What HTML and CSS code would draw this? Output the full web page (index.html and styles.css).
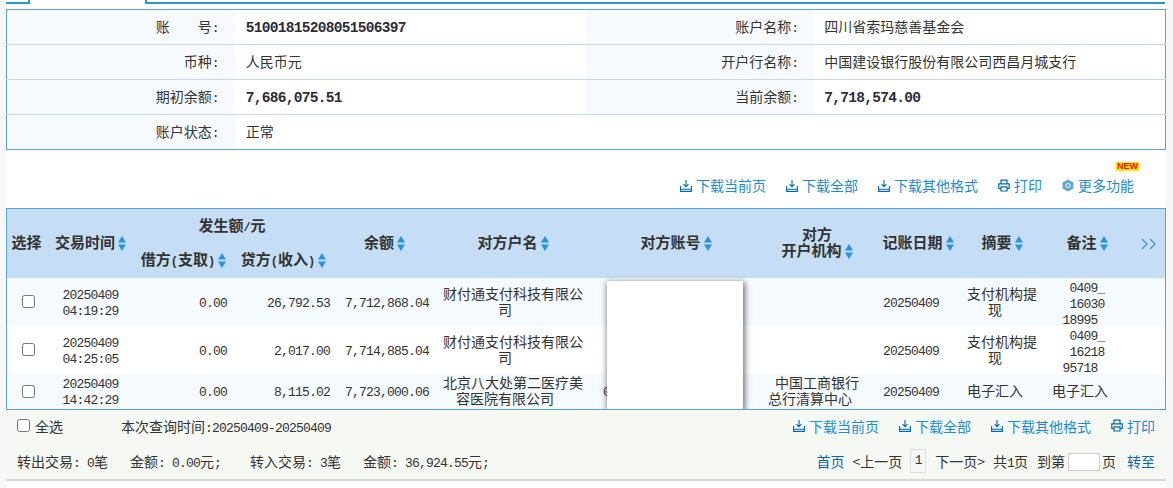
FILE: index.html
```html
<!DOCTYPE html>
<html lang="zh-CN">
<head>
<meta charset="utf-8">
<title>账户明细</title>
<link rel="stylesheet" href="styles.css">
</head>
<body>
<svg class="defs" width="0" height="0" aria-hidden="true">
  <symbol id="dl" viewBox="0 0 12 13"><path d="M6 1v6.5M3.6 5.2 6 7.8l2.400-2.600M.6 7v5.400h10.800V7M.6 10.300h10.800" fill="none" stroke="currentColor" stroke-width="1.100"/></symbol>
  <symbol id="pr" viewBox="0 0 12 13"><path d="M3 4.500V1.200h6v3.300M3 9.500H.8V4.800h10.400v4.700H9M3 7.800h6v4.200H3z" fill="none" stroke="currentColor" stroke-width="1.200"/></symbol>
  <symbol id="gear" viewBox="0 0 12 13"><path d="M6 .5 11.400 3.500v6L6 12.500.6 9.500v-6z" fill="#5aa7dc"/><circle cx="6" cy="6.500" r="2.600" fill="#dcecf8"/><circle cx="6" cy="6.500" r="1.300" fill="#4a9ad6"/></symbol>
  <symbol id="sort" viewBox="0 0 8 15"><path d="M4 0 8 6.500H0zM4 15 0 8.500h8z" fill="#2a93dd"/></symbol>
</svg>
<div class="page">
  <div class="tabs"><span class="tab-left"></span><span class="tab-right"></span></div>

  <table class="info">
    <colgroup><col class="c-label"><col class="c-value"><col class="c-label"><col class="c-value"></colgroup>
    <tr><th>账　　号<span class="num">:</span></th><td><b class="strong">51001815208051506397</b></td><th>账户名称<span class="num">:</span></th><td>四川省索玛慈善基金会</td></tr>
    <tr><th>币种<span class="num">:</span></th><td>人民币元</td><th>开户行名称<span class="num">:</span></th><td>中国建设银行股份有限公司西昌月城支行</td></tr>
    <tr><th>期初余额<span class="num">:</span></th><td><b class="strong">7,686,075.51</b></td><th>当前余额<span class="num">:</span></th><td><b class="strong">7,718,574.00</b></td></tr>
    <tr><th>账户状态<span class="num">:</span></th><td>正常</td><td class="blank" colspan="2"></td></tr>
  </table>

  <div class="tools tools-top">
    <a class="tool"><svg class="ico"><use href="#dl"/></svg>下载当前页</a>
    <a class="tool"><svg class="ico"><use href="#dl"/></svg>下载全部</a>
    <a class="tool"><svg class="ico"><use href="#dl"/></svg>下载其他格式</a>
    <a class="tool"><svg class="ico"><use href="#pr"/></svg>打印</a>
    <a class="tool more"><svg class="ico"><use href="#gear"/></svg>更多功能<span class="new">NEW</span></a>
  </div>

  <div class="grid-wrap">
    <table class="grid">
      <colgroup>
        <col class="w39"><col class="w89"><col class="w97"><col class="w103"><col class="w99"><col class="w158"><col class="w168"><col class="w114"><col class="w88"><col class="w80"><col class="w90"><col class="w33">
      </colgroup>
      <thead>
        <tr class="h1">
          <th rowspan="2">选择</th>
          <th rowspan="2">交易时间<svg class="sort"><use href="#sort"/></svg></th>
          <th colspan="2" class="amount">发生额<span class="paren">/</span>元</th>
          <th rowspan="2">余额<svg class="sort"><use href="#sort"/></svg></th>
          <th rowspan="2">对方户名<svg class="sort"><use href="#sort"/></svg></th>
          <th rowspan="2">对方账号<svg class="sort"><use href="#sort"/></svg></th>
          <th rowspan="2">对方<br>开户机构<svg class="sort"><use href="#sort"/></svg></th>
          <th rowspan="2">记账日期<svg class="sort"><use href="#sort"/></svg></th>
          <th rowspan="2">摘要<svg class="sort"><use href="#sort"/></svg></th>
          <th rowspan="2">备注<svg class="sort"><use href="#sort"/></svg></th>
          <th rowspan="2"><svg class="chev" viewBox="0 0 16 12"><path d="M1 1l5 5-5 5M9 1l5 5-5 5" fill="none" stroke="#3f8fd0" stroke-width="1.200"/></svg></th>
        </tr>
        <tr class="h2">
          <th>借方<span class="paren">(</span>支取<span class="paren">)</span><svg class="sort"><use href="#sort"/></svg></th>
          <th>贷方<span class="paren">(</span>收入<span class="paren">)</span><svg class="sort"><use href="#sort"/></svg></th>
        </tr>
      </thead>
      <tbody>
        <tr class="row odd">
          <td class="ck"><input type="checkbox"></td>
          <td class="mid"><span class="num">20250409<br>04:19:29</span></td>
          <td class="amt"><span class="num">0.00</span></td>
          <td class="amt"><span class="num">26,792.53</span></td>
          <td class="amt"><span class="num">7,712,868.04</span></td>
          <td class="mid">财付通支付科技有限公<span class="back back16">司</span></td>
          <td></td>
          <td></td>
          <td class="mid"><span class="back"><span class="num">20250409</span></span></td>
          <td class="mid">支付机构提<span class="back">现</span></td>
          <td class="mid rem"><span class="num">0409_<br>16030</span><span class="back"><span class="num">18995</span></span></td>
          <td></td>
        </tr>
        <tr class="row">
          <td class="ck"><input type="checkbox"></td>
          <td class="mid"><span class="num">20250409<br>04:25:05</span></td>
          <td class="amt"><span class="num">0.00</span></td>
          <td class="amt"><span class="num">2,017.00</span></td>
          <td class="amt"><span class="num">7,714,885.04</span></td>
          <td class="mid">财付通支付科技有限公<span class="back back16">司</span></td>
          <td></td>
          <td></td>
          <td class="mid"><span class="back"><span class="num">20250409</span></span></td>
          <td class="mid">支付机构提<span class="back">现</span></td>
          <td class="mid rem"><span class="num">0409_<br>16218</span><span class="back"><span class="num">95718</span></span></td>
          <td></td>
        </tr>
        <tr class="row odd short">
          <td class="ck"><input type="checkbox"></td>
          <td class="mid"><span class="num">20250409<br>14:42:29</span></td>
          <td class="amt"><span class="num">0.00</span></td>
          <td class="amt"><span class="num">8,115.02</span></td>
          <td class="amt"><span class="num">7,723,000.06</span></td>
          <td class="mid">北京八大处第二医疗美<span class="back back16">容医院有限公司</span></td>
          <td class="acct"><span class="num">0</span></td>
          <td class="mid">中国工商银行<span class="back">总行清算中心</span></td>
          <td class="mid"><span class="back"><span class="num">20250409</span></span></td>
          <td class="mid"><span class="back">电子汇入</span></td>
          <td class="mid"><span class="back">电子汇入</span></td>
          <td></td>
        </tr>
      </tbody>
    </table>
    <div class="mask"></div>
  </div>

  <div class="foot">
    <div class="foot-row">
      <label class="all"><input type="checkbox">全选</label>
      <span class="query">本次查询时间<span class="num">:20250409-20250409</span></span>
      <div class="tools tools-bottom">
        <a class="tool"><svg class="ico"><use href="#dl"/></svg>下载当前页</a>
        <a class="tool"><svg class="ico"><use href="#dl"/></svg>下载全部</a>
        <a class="tool"><svg class="ico"><use href="#dl"/></svg>下载其他格式</a>
        <a class="tool"><svg class="ico"><use href="#pr"/></svg>打印</a>
      </div>
    </div>
    <div class="foot-row">
      <span class="stat s1">转出交易<span class="num">: 0</span>笔</span>
      <span class="stat s2">金额<span class="num">: 0.00</span>元<span class="num">;</span></span>
      <span class="stat s3">转入交易<span class="num">: 3</span>笔</span>
      <span class="stat">金额<span class="num">: 36,924.55</span>元<span class="num">;</span></span>
      <div class="pager">
        <a class="plink">首页</a>
        <span class="pg">&lt;上一页</span>
        <span class="cur"><span class="num">1</span></span>
        <span class="pg">下一页&gt;</span>
        <span class="pg">共<b class="num">1</b>页</span>
        <span class="goto">到第</span>
        <span class="pinput"></span>
        <span>页</span>
        <a class="plink go">转至</a>
      </div>
    </div>
  </div>
</div>
</body>
</html>
```

FILE: styles.css
```css
* { box-sizing: border-box; }
html, body { margin: 0; padding: 0; }
body {
  background: #f7f7f7;
  color: #333;
  font: 14px/16px "Noto Sans CJK SC", "Liberation Sans", sans-serif;
  overflow: hidden;
}
.defs { position: absolute; }
.page { width: 1160px; height: 488px; margin-left: 6px; background: #fff; overflow: hidden; }
.num { font-family: "Liberation Mono", monospace; font-size: 13px; letter-spacing: -.8px; font-weight: normal; line-height: 10px; }
.strong { font-family: "Liberation Mono", monospace; font-size: 14.5px; letter-spacing: -.7px; font-weight: bold; color: #2b2b3a; line-height: 10px; }
.paren { font-family: "Liberation Mono", monospace; font-size: 12px; line-height: 10px; }

.tabs { display: flex; height: 4px; margin-bottom: 5px; }
.tab-left { width: 24px; border-right: 2px solid #2a96d6; border-bottom: 2px solid #2a96d6; }
.tab-right { flex: 1; margin-left: 115px; margin-right: 1px; border-left: 2px solid #2a96d6; border-bottom: 2px solid #2a96d6; }

.info { width: 1160px; height: 141px; border-collapse: collapse; table-layout: fixed; border: 1px solid #5ba3e0; }
.c-label { width: 228px; }
.c-value { width: 351px; }
.info tr { height: 35px; border-bottom: 1px solid #c5d9ee; }
.info tr:last-child { border-bottom: 0; }
.info th { background: #f6fafe; font-weight: normal; text-align: right; padding: 0 16px 2px 0; }
.info td { padding: 0 0 2px 10px; }
.info td:nth-child(2) { padding-left: 11px; }
.info .blank { padding: 0; }

.tools { display: flex; justify-content: flex-end; gap: 20px; color: #1e8bd2; }
.tools-top { height: 58px; padding: 27px 32px 0 0; }
.tool { display: flex; align-items: center; height: 16px; position: relative; }
.ico { width: 12px; height: 13px; margin-right: 4px; color: #0068b7; }
.new {
  position: absolute; right: -5px; top: -15px;
  font: bold 9px/9px "Liberation Sans", sans-serif;
  color: #e8121a;
  background: #ffe600;
  padding: 0 1px;
}

.grid-wrap { position: relative; height: 202px; border: 1px solid #5ba3e0; overflow: hidden; }
.grid { width: 1158px; border-collapse: collapse; table-layout: fixed; }
.w39 { width: 39px; } .w89 { width: 89px; } .w97 { width: 97px; } .w103 { width: 103px; }
.w99 { width: 99px; } .w158 { width: 158px; } .w168 { width: 168px; } .w114 { width: 114px; }
.w88 { width: 88px; } .w80 { width: 80px; } .w90 { width: 90px; } .w33 { width: 33px; }
.grid th { background: #c6def5; font-size: 15px; font-weight: bold; padding: 0 0 3px; text-align: center; white-space: nowrap; }
.h1 { height: 35px; }
.h2 { height: 34px; }
.amount { padding-right: 6px !important; }
.sort { width: 8px; height: 15px; margin-left: 3px; vertical-align: -3px; }
.chev { width: 16px; height: 12px; vertical-align: middle; }
.row { height: 48px; }
.row.short { height: 35px; }
.odd td { background: #f5fafe; }
.grid td { padding: 0 0 2px; white-space: nowrap; }
.grid .rem { padding-bottom: 0; }
.grid .short td { padding-bottom: 3px; }
.grid .ck { padding-bottom: 5px; }
.ck, .mid { text-align: center; }
.ck input { margin: 0 0 0 4px; vertical-align: middle; }
.amt { text-align: right; padding-right: 5px !important; }
.back { display: block; padding-right: 14px; line-height: 16px; }
.back16 { padding-right: 16px; }
.acct { padding-left: 11px !important; }
.mask {
  position: absolute; left: 600px; top: 72px; width: 136px; height: 129px;
  background: #fff;
  box-shadow: 1px 2px 6px 1px rgba(0,0,0,.55);
}

.foot { height: 71px; background: #f6f8f4; border-bottom: 2px solid #d8d8d8; padding: 0 11px; }
.foot-row { display: flex; align-items: center; height: 35px; padding-bottom: 4px; }
.all { display: flex; align-items: center; }
.all input { margin: 0 5px 0 0; width: 13px; height: 13px; }
.query { margin-left: 58px; }
.tools-bottom { margin-left: auto; }
.stat { white-space: nowrap; }
.s1 { width: 113px; }
.s2 { width: 120px; }
.s3 { width: 113px; }
.pager { margin-left: auto; display: flex; align-items: center; }
.plink { color: #0a64ad; }
.pg { margin-left: 8px; }
.cur {
  margin-left: 8px; width: 16px; height: 24px;
  display: flex; align-items: center; justify-content: center;
  border: 1px solid #ddd; background: #f6f6f6;
}
.cur + .pg { margin-left: 9px; }
.goto { margin-left: 9px; }
.pinput { width: 32px; height: 18px; margin: 2px 2px 0 3px; background: #fff; border: 1px solid #ccc; }
.go { margin-left: 11px; }
```
